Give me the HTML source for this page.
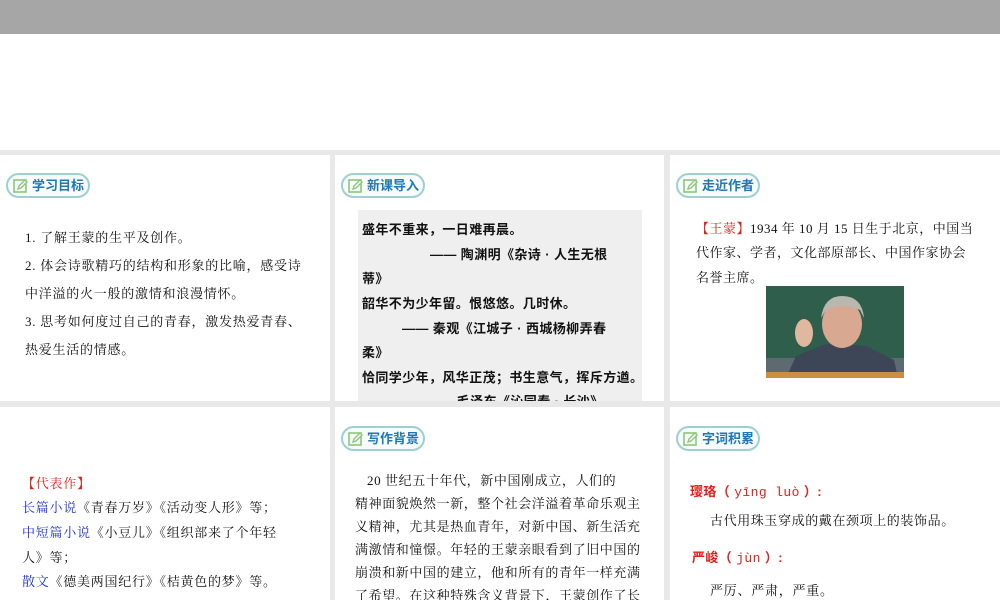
<!DOCTYPE html>
<html><head><meta charset="utf-8"><style>
*{margin:0;padding:0;box-sizing:border-box}
body{width:1000px;height:600px;overflow:hidden;background:#e8e8e8;position:relative;font-family:"Liberation Serif","Noto Serif CJK SC",serif;color:#111}
.top{position:absolute;left:0;top:0;width:1000px;height:34px;background:#a6a6a6}
.white{position:absolute;left:0;top:34px;width:1000px;height:116px;background:#fff}
.p{position:absolute;background:#fff;overflow:hidden}
.badge{position:absolute;height:25px;width:84px;border:2px solid #9fd0d0;border-radius:13px;background:#f7fbfb;font-family:"Liberation Sans","Noto Sans CJK SC",sans-serif;font-weight:bold;color:#1f78b4;font-size:13px;line-height:21px;padding-left:24px;letter-spacing:0}
.badge svg{position:absolute;left:5px;top:3px}
.t{position:absolute;font-size:13px;white-space:nowrap;letter-spacing:0.75px}
.s{font-family:"Liberation Sans","Noto Sans CJK SC",sans-serif;font-weight:bold;letter-spacing:0.4px}
.r{color:#e0201c}.b{color:#1c2fd0}
</style></head><body>
<div class="top"></div><div class="white"></div>
<svg width="0" height="0" style="position:absolute"><defs><g id="ic"><rect x="1" y="2" width="12" height="12" fill="none" stroke="#8cc878" stroke-width="1.6"/><path d="M5 11 L6 8 L12 2 L14 4 L8 10 Z" fill="#fff" stroke="#8cc878" stroke-width="1.4"/></g></defs></svg>

<div class="p" style="left:0;top:155px;width:330px;height:246px">
<div class="badge" style="left:6px;top:18px"><svg width="16" height="16"><use href="#ic"/></svg>学习目标</div>
<div class="t" style="left:25px;top:72px">1. 了解王蒙的生平及创作。</div>
<div class="t" style="left:25px;top:100px">2. 体会诗歌精巧的结构和形象的比喻，感受诗</div>
<div class="t" style="left:25px;top:128px">中洋溢的火一般的激情和浪漫情怀。</div>
<div class="t" style="left:25px;top:156px">3. 思考如何度过自己的青春，激发热爱青春、</div>
<div class="t" style="left:25px;top:184px">热爱生活的情感。</div>
</div>

<div class="p" style="left:335px;top:155px;width:329px;height:246px">
<div class="badge" style="left:6px;top:18px"><svg width="16" height="16"><use href="#ic"/></svg>新课导入</div>
<div style="position:absolute;left:23px;top:55px;width:284px;height:200px;background:#efefef"></div>
<div class="t s" style="left:27px;top:64px">盛年不重来，一日难再晨。</div>
<div class="t s" style="left:95px;top:89px">—— 陶渊明《杂诗 · 人生无根</div>
<div class="t s" style="left:27px;top:113px">蒂》</div>
<div class="t s" style="left:27px;top:138px">韶华不为少年留。恨悠悠。几时休。</div>
<div class="t s" style="left:67px;top:163px">—— 秦观《江城子 · 西城杨柳弄春</div>
<div class="t s" style="left:27px;top:187px">柔》</div>
<div class="t s" style="left:27px;top:212px">恰同学少年，风华正茂；书生意气，挥斥方遒。</div>
<div class="t s" style="left:95px;top:236px">——毛泽东《沁园春 · 长沙》</div>
</div>

<div class="p" style="left:670px;top:155px;width:330px;height:246px">
<div class="badge" style="left:6px;top:18px"><svg width="16" height="16"><use href="#ic"/></svg>走近作者</div>
<div class="t" style="left:26px;top:63px;letter-spacing:0.5px"><span class="r">【王蒙】</span>1934 年 10 月 15 日生于北京，中国当</div>
<div class="t" style="left:26px;top:87px;letter-spacing:0.5px">代作家、学者，文化部原部长、中国作家协会</div>
<div class="t" style="left:26px;top:112px;letter-spacing:0.5px">名誉主席。</div>
<svg style="position:absolute;left:96px;top:131px" width="138" height="92">
<rect width="138" height="92" fill="#2f5e4c"/>
<rect y="72" width="138" height="20" fill="#5d6a70"/>
<path d="M20 92 L30 70 L60 58 L100 60 L128 74 L132 92Z" fill="#3c4656"/>
<ellipse cx="76" cy="38" rx="20" ry="24" fill="#d8a890"/>
<path d="M55 32 Q58 10 76 10 Q96 10 98 32 L94 24 Q76 16 60 24Z" fill="#b8b8b0"/>
<ellipse cx="38" cy="47" rx="9" ry="14" fill="#e0b8a0"/>
<rect x="0" y="86" width="138" height="6" fill="#c89040"/>
</svg>
</div>

<div class="p" style="left:0;top:407px;width:330px;height:193px">
<div class="t r" style="left:22px;top:66px">【代表作】</div>
<div class="t" style="left:22px;top:90px"><span class="b">长篇小说</span>《青春万岁》《活动变人形》等；</div>
<div class="t" style="left:22px;top:115px"><span class="b">中短篇小说</span>《小豆儿》《组织部来了个年轻</div>
<div class="t" style="left:22px;top:140px">人》等；</div>
<div class="t" style="left:22px;top:164px"><span class="b">散文</span>《德美两国纪行》《桔黄色的梦》等。</div>
</div>

<div class="p" style="left:335px;top:407px;width:329px;height:193px">
<div class="badge" style="left:6px;top:19px"><svg width="16" height="16"><use href="#ic"/></svg>写作背景</div>
<div class="t" style="left:32px;top:63px;letter-spacing:0.6px">20 世纪五十年代，新中国刚成立，人们的</div>
<div class="t" style="left:20px;top:86px;letter-spacing:0.6px">精神面貌焕然一新，整个社会洋溢着革命乐观主</div>
<div class="t" style="left:20px;top:109px;letter-spacing:0.6px">义精神，尤其是热血青年，对新中国、新生活充</div>
<div class="t" style="left:20px;top:132px;letter-spacing:0.6px">满激情和憧憬。年轻的王蒙亲眼看到了旧中国的</div>
<div class="t" style="left:20px;top:155px;letter-spacing:0.6px">崩溃和新中国的建立，他和所有的青年一样充满</div>
<div class="t" style="left:20px;top:178px;letter-spacing:0.6px">了希望。在这种特殊含义背景下，王蒙创作了长</div>
</div>

<div class="p" style="left:670px;top:407px;width:330px;height:193px">
<div class="badge" style="left:6px;top:19px"><svg width="16" height="16"><use href="#ic"/></svg>字词积累</div>
<div class="t r s" style="left:20px;top:74px">璎珞（ <span style="font-family:'Liberation Mono',monospace;font-weight:normal">yīng luò</span> ）:</div>
<div class="t" style="left:40px;top:103px;letter-spacing:0.6px">古代用珠玉穿成的戴在颈项上的装饰品。</div>
<div class="t r s" style="left:22px;top:140px">严峻（ <span style="font-family:'Liberation Mono',monospace;font-weight:normal">jùn</span> ）:</div>
<div class="t" style="left:40px;top:173px">严厉、严肃，严重。</div>
</div>
</body></html>
